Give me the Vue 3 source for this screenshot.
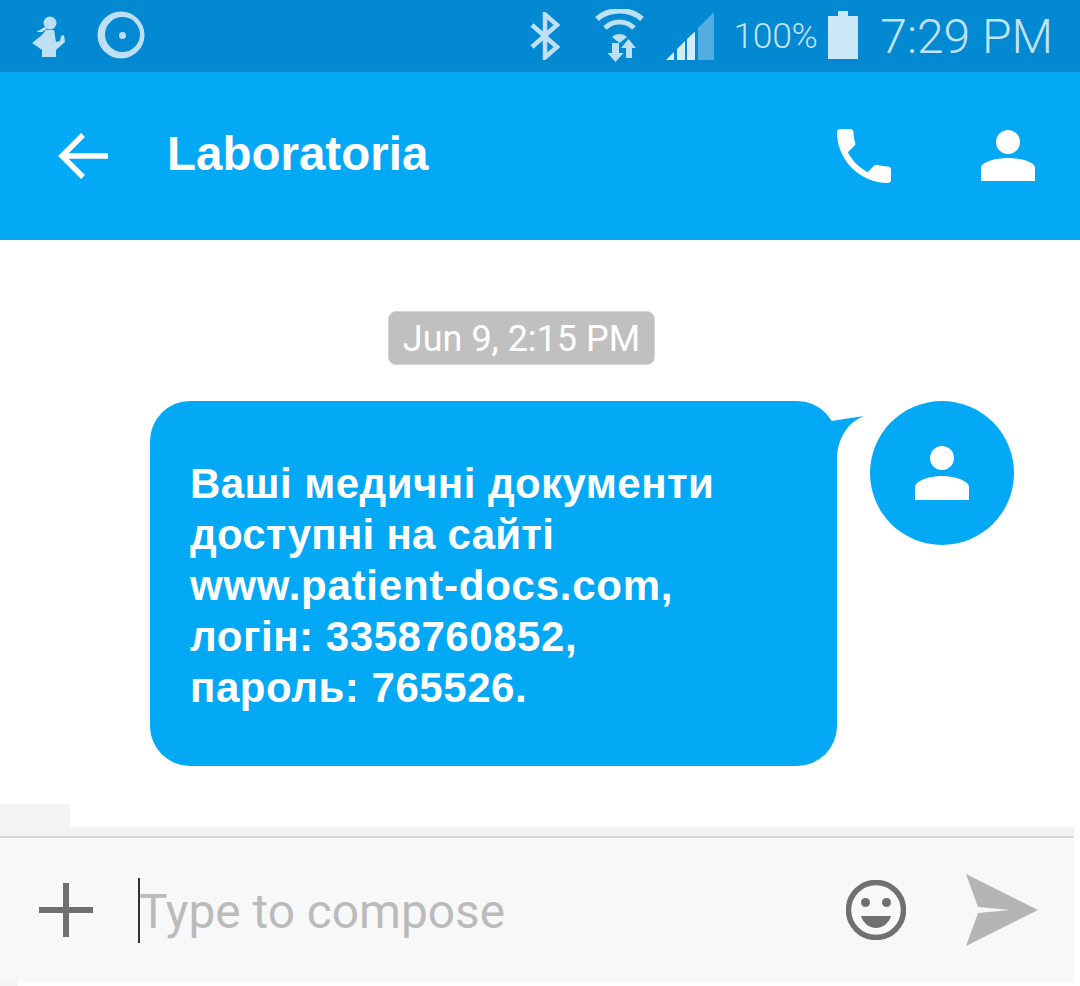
<template>
  <div class="phone">
    <div class="status-bar">
      <svg class="st-runner" width="34" height="44" viewBox="0 0 34 44">
        <circle cx="18" cy="9" r="6.500" fill="#bde0f5" />
        <path d="M4 18 L13 13 L15 15 L10 18 Z" fill="#bde0f5" />
        <path d="M14 16 H22 C23 19 23 24 24 28 L28 27 L29 22 L32 21 L33 28 L24 36 V43 H10 V36 L0 29 L10 21 Z" fill="#bde0f5" />
      </svg>
      <svg class="st-ring" width="48" height="48" viewBox="0 0 48 48">
        <path fill-rule="evenodd" d="M24 .5a23.5 23.5 0 1 0 0 47a23.5 23.5 0 1 0 0-47zM25.500 6a17.500 17.500 0 1 1 0 35a17.500 17.500 0 1 1 0-35z" fill="#bde0f5" />
        <circle cx="25.500" cy="24.500" r="3.500" fill="#bde0f5" />
      </svg>
      <div class="spacer"></div>
      <svg class="st-bt" width="34" height="48" viewBox="0 0 34 48">
        <path d="M2 13 L27 35 L15 45.500 V2.500 L27 13 L2 35" fill="none" stroke="#bde0f5" stroke-width="4.500" />
      </svg>
      <svg class="st-wifi" width="52" height="54" viewBox="0 0 52 54">
        <path d="M2 10 C14 -1 35 -1 47 10" fill="none" stroke="#bde0f5" stroke-width="5.500" />
        <path d="M10 19 C18 11 31 11 39 19" fill="none" stroke="#bde0f5" stroke-width="5" />
        <path d="M17 28 C21 24 28 24 32 28 L24.500 34 Z" fill="#bde0f5" />
        <path d="M17 34 H24 V44 H28.500 L20.500 53 L12.500 44 H17 Z M31 49 V39 H26 L33.500 30 L41 39 H37 V49 Z" fill="#bde0f5" />
      </svg>
      <svg class="st-signal" width="48" height="48" viewBox="0 0 48 48">
        <path d="M0 48 L8 40 V48 Z M11 48 V37 L19 29 V48 Z M21 48 V27 L29 19.500 V48 Z" fill="#d3ecfa" />
        <path d="M32 48 V16 L48 0 V48 Z" fill="#52aee2" />
      </svg>
      <span class="st-pct">100%</span>
      <svg class="st-battery" width="30" height="48" viewBox="0 0 30 48">
        <path d="M10 0 H20 V5 H30 V48 H0 V5 H10 Z" fill="#cce8f8" />
      </svg>
      <span class="st-time">7:29 PM</span>
    </div>

    <header class="app-bar">
      <svg class="back" width="50" height="46" viewBox="0 0 50 46">
        <path d="M50 23 H4 M25 2 L4 23 L25 44" fill="none" stroke="#fff" stroke-width="5.500" />
      </svg>
      <h1 class="title">Laboratoria</h1>
      <svg class="call" width="72" height="72" viewBox="0 0 24 24">
        <path fill="#fff" d="M6.620 10.790c1.440 2.830 3.760 5.140 6.590 6.590l2.200-2.200c.27-.27.67-.36 1.020-.24 1.120.37 2.330.57 3.570.57.550 0 1 .45 1 1V20c0 .55-.45 1-1 1-9.390 0-17-7.610-17-17 0-.55.45-1 1-1h3.500c.55 0 1 .45 1 1 0 1.250.2 2.450.57 3.570.11.35.03.74-.25 1.020l-2.200 2.200z" />
      </svg>
      <svg class="person" width="54" height="51" viewBox="0 0 54 51">
        <circle cx="27" cy="12" r="12" fill="#fff" />
        <path d="M0 51 V38 C0 32 14 28 27 28 C40 28 54 32 54 38 V51 Z" fill="#fff" />
      </svg>
    </header>

    <main class="thread">
      <div class="date-row"><span class="date-pill">Jun 9, 2:15 PM</span></div>
      <div class="message-row">
        <div class="bubble">
          <p v-for="line in lines" :key="line">{{ line }}</p>
          <svg class="tail" width="46" height="46" viewBox="0 0 46 46">
            <path d="M0 4 L46 -3 C30 3 20 19 19 38 L0 38 Z" fill="#04a9f6" />
          </svg>
        </div>
        <div class="avatar">
          <svg width="54" height="54" viewBox="0 0 54 54">
            <circle cx="27" cy="12" r="12" fill="#fff" />
            <path d="M0 54 V41 C0 35 14 30 27 30 C40 30 54 35 54 41 V54 Z" fill="#fff" />
          </svg>
        </div>
      </div>
      <div class="corner-patch"></div>
    </main>

    <footer class="composer">
      <div class="composer-strip"></div>
      <div class="composer-bar">
        <svg class="plus" width="54" height="54" viewBox="0 0 54 54">
          <path d="M27 0 V54 M0 27 H54" stroke="#707070" stroke-width="6" />
        </svg>
        <div class="input">
          <span class="caret"></span>
          <span class="placeholder">Type to compose</span>
        </div>
        <svg class="smile" width="60" height="60" viewBox="0 0 60 60">
          <circle cx="30" cy="30" r="27.500" fill="none" stroke="#707070" stroke-width="5.500" />
          <circle cx="19.500" cy="22.500" r="4.500" fill="#707070" />
          <circle cx="40.500" cy="22.500" r="4.500" fill="#707070" />
          <path d="M15 36 H45 C43 43 37 48 30 48 C23 48 17 43 15 36 Z" fill="#707070" />
        </svg>
        <svg class="send" width="72" height="72" viewBox="0 0 72 72">
          <path d="M0 0 L72 36 L0 72 L12 39 L44 36 L12 33 Z" fill="#b5b5b5" />
        </svg>
      </div>
      <div class="bottom-patch"></div>
    </footer>
  </div>
</template>

<script setup>
const lines = [
  'Ваші медичні документи',
  'доступні на сайті',
  'www.patient-docs.com,',
  'логін: 3358760852,',
  'пароль: 765526.'
]
</script>

<style>
html, body {
  margin: 0;
  background: #fff;
}
</style>

<style scoped>
.phone {
  width: 1080px;
  height: 986px;
  overflow: hidden;
  display: flex;
  flex-direction: column;
  font-family: "Liberation Sans", Arial, sans-serif;
}

.status-bar {
  height: 72px;
  flex: none;
  display: flex;
  align-items: center;
  background: #0388d2;
  color: #c2e2f6;
  font-family: Roboto, sans-serif;
  font-weight: 300;
}
.st-runner { margin-left: 32px; }
.st-ring { margin-left: 31px; margin-top: -2px; }
.spacer { flex: 1; }
.st-wifi { margin-left: 31px; margin-top: -1px; }
.st-signal { margin-left: 19px; }
.st-pct {
  margin-left: 20px;
  font-size: 35.5px;
  letter-spacing: -0.4px;
}
.st-battery { margin-left: 11px; margin-top: -2px; }
.st-time {
  margin-left: 22px;
  margin-right: 27px;
  font-size: 48px;
}

.app-bar {
  height: 168px;
  flex: none;
  display: flex;
  align-items: center;
  background: #04a9f6;
  color: #fff;
}
.back { margin-left: 58px; }
.title {
  flex: 1;
  margin: 0 0 6px 59px;
  font-size: 47.5px;
  font-weight: 700;
}
.call { margin-right: 81px; }
.person { margin-right: 45px; margin-top: -1px; }

.thread {
  height: 587px;
  flex: none;
  background: #fff;
  display: flex;
  flex-direction: column;
  padding-top: 71px;
  box-sizing: border-box;
}
.date-row {
  display: flex;
  padding-left: 388px;
}
.date-pill {
  width: 267px;
  height: 54px;
  line-height: 54px;
  text-align: center;
  box-sizing: border-box;
  border: 1px solid #d4d4d4;
  border-radius: 8px;
  background: #c0c0c0;
  color: #fff;
  font-family: Roboto, sans-serif;
  font-size: 36px;
}
.message-row {
  display: flex;
  align-items: flex-start;
  margin-top: 36px;
  padding-left: 150px;
}
.bubble {
  position: relative;
  width: 687px;
  height: 365px;
  box-sizing: border-box;
  padding: 57px 40px 0;
  border-radius: 40px;
  background: #04a9f6;
  color: #fff;
  font-size: 42px;
  letter-spacing: 0.45px;
  font-weight: 700;
  line-height: 51px;
}
.bubble p {
  margin: 0;
  white-space: nowrap;
}
.bubble p:nth-child(2) { letter-spacing: 0.25px; }
.bubble p:nth-child(3) { letter-spacing: 0.75px; }
.bubble p:nth-child(4),
.bubble p:nth-child(5) { letter-spacing: 0.55px; }
.tail {
  position: absolute;
  left: 668px;
  top: 18px;
  overflow: visible;
}
.avatar {
  width: 144px;
  height: 144px;
  margin-left: 33px;
  border-radius: 50%;
  background: #04a9f6;
  display: flex;
  align-items: center;
  justify-content: center;
}
.corner-patch {
  width: 70px;
  height: 23px;
  margin-top: 38px;
  background: #f3f3f3;
}

.composer {
  flex: 1;
  display: flex;
  flex-direction: column;
}
.composer-strip {
  width: 1074px;
  height: 9px;
  flex: none;
  background: #f3f3f3;
  border-bottom: 2px solid #d6d6d6;
}
.composer-bar {
  width: 1074px;
  height: 144px;
  flex: none;
  display: flex;
  align-items: center;
  background: #f8f8f8;
}
.plus { margin-left: 39px; }
.input {
  flex: 1;
  display: flex;
  align-items: center;
  margin-left: 45px;
}
.caret {
  width: 2px;
  height: 65px;
  background: #333;
}
.placeholder {
  margin-top: 4px;
  margin-left: -1px;
  font-family: Roboto, sans-serif;
  font-size: 47.8px;
  color: #bbb;
}
.smile { margin-right: 60px; }
.send { margin-right: 36px; }
.bottom-patch {
  width: 18px;
  flex: 1;
  background: #f3f3f3;
}
</style>
